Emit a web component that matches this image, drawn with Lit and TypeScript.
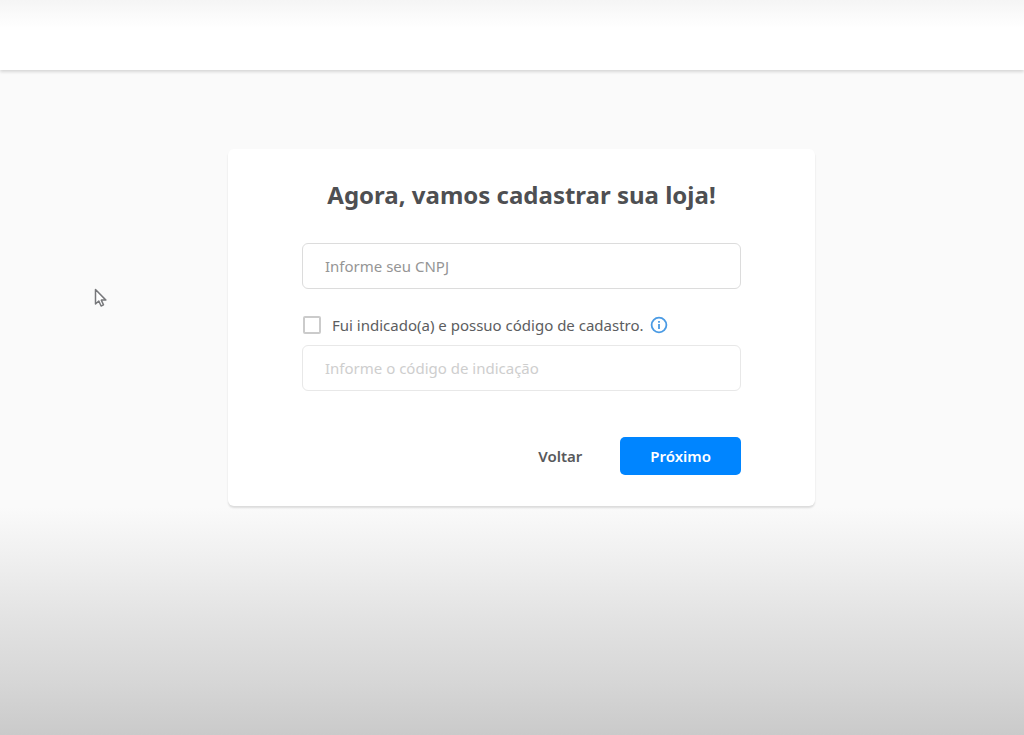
import { LitElement, html, css } from "lit";
import { customElement, state } from "lit/decorators.js";

@customElement("app-root")
export class AppRoot extends LitElement {
  static styles = css`
    :host {
      display: flex;
      flex-direction: column;
      position: relative;
      min-height: 100vh;
      background: linear-gradient(
        #fafafa 0,
        #fafafa 69%,
        #f1f1f1 75%,
        #e3e3e3 84%,
        #d6d6d6 93%,
        #cacaca 100%
      );
      color: #5c5d60;
      font-family: "Noto Sans", "Open Sans", sans-serif;
      font-size: 15px;
      line-height: 24px;
    }
    * {
      box-sizing: border-box;
    }
    .topbar {
      height: 70px;
      background: linear-gradient(#f5f5f5, #ffffff 28px);
      box-shadow: 0 2px 3px rgba(0, 0, 0, 0.14);
    }
    main {
      display: flex;
      justify-content: center;
      padding: 79px 0 32px 19px;
    }
    .card {
      display: flex;
      flex-direction: column;
      width: 100%;
      max-width: 587px;
      padding: 30px 74px 31px;
      border-radius: 6px;
      background: #ffffff;
      box-shadow: 0 2px 2px rgba(0, 0, 0, 0.12);
    }
    h1 {
      margin: 0 0 32px;
      color: #4e4f52;
      font-size: 24px;
      font-weight: 700;
      line-height: 32px;
      text-align: center;
    }
    .field {
      width: 100%;
      height: 46px;
      padding: 0 22px;
      border: 1px solid #dcdcdc;
      border-radius: 6px;
      background: #ffffff;
      color: inherit;
      font: inherit;
    }
    .field::placeholder {
      color: #959595;
      opacity: 1;
    }
    .field:disabled {
      border-color: #e8e8e8;
    }
    .field:disabled::placeholder {
      color: #cecece;
    }
    .referral {
      display: flex;
      align-items: center;
      margin: 24px 0 8px;
    }
    .check {
      display: flex;
      align-items: center;
      gap: 11px;
    }
    .check input {
      appearance: none;
      width: 18px;
      height: 18px;
      margin: 0 0 0 1px;
      border: 2px solid #cbcbcb;
      border-radius: 2px;
      background: #ffffff;
    }
    .check input:checked {
      border-color: #0085ff;
      background: #0085ff;
    }
    .info {
      display: flex;
      margin-left: 6px;
      padding: 0;
      border: 0;
      background: none;
    }
    .actions {
      display: flex;
      justify-content: flex-end;
      gap: 8px;
      margin-top: 46px;
    }
    .btn {
      height: 38px;
      padding: 0 30px;
      border: 0;
      border-radius: 5px;
      background: none;
      color: #58595c;
      font: inherit;
      font-weight: 600;
    }
    .primary {
      background: #0085ff;
      color: #ffffff;
    }
    .pointer {
      position: absolute;
      left: 94px;
      top: 288px;
    }
  `;

  @state() private referred = false;

  private toggle(e: Event) {
    this.referred = (e.target as HTMLInputElement).checked;
  }

  render() {
    return html`
      <header class="topbar"></header>
      <main>
        <form class="card" @submit=${(e: Event) => e.preventDefault()}>
          <h1>Agora, vamos cadastrar sua loja!</h1>
          <input class="field" type="text" aria-label="Informe seu CNPJ" placeholder="Informe seu CNPJ" />
          <div class="referral">
            <label class="check">
              <input type="checkbox" .checked=${this.referred} @change=${this.toggle} />
              <span>Fui indicado(a) e possuo código de cadastro.</span>
            </label>
            <button class="info" type="button" aria-label="Informações">
              <svg width="18" height="18" viewBox="0 0 18 18" fill="none" stroke="#4b9be4" aria-hidden="true">
                <circle cx="9" cy="9" r="7.4" stroke-width="1.8" />
                <path d="M9 8v5M9 5v1.7" stroke-width="1.8" />
              </svg>
            </button>
          </div>
          <input
            class="field"
            type="text"
            aria-label="Informe o código de indicação"
            placeholder="Informe o código de indicação"
            ?disabled=${!this.referred}
          />
          <div class="actions">
            <button class="btn" type="button">Voltar</button>
            <button class="btn primary" type="submit">Próximo</button>
          </div>
        </form>
      </main>
      <svg class="pointer" width="14" height="21" viewBox="0 0 14 21" aria-hidden="true">
        <path
          d="M1.5 1.5V16l3.3-3 2.3 5 2.4-1.1-2.2-4.8h4.6z"
          fill="#ffffff"
          stroke="#77787b"
          stroke-width="1.5"
          stroke-linejoin="round"
        />
      </svg>
    `;
  }
}
